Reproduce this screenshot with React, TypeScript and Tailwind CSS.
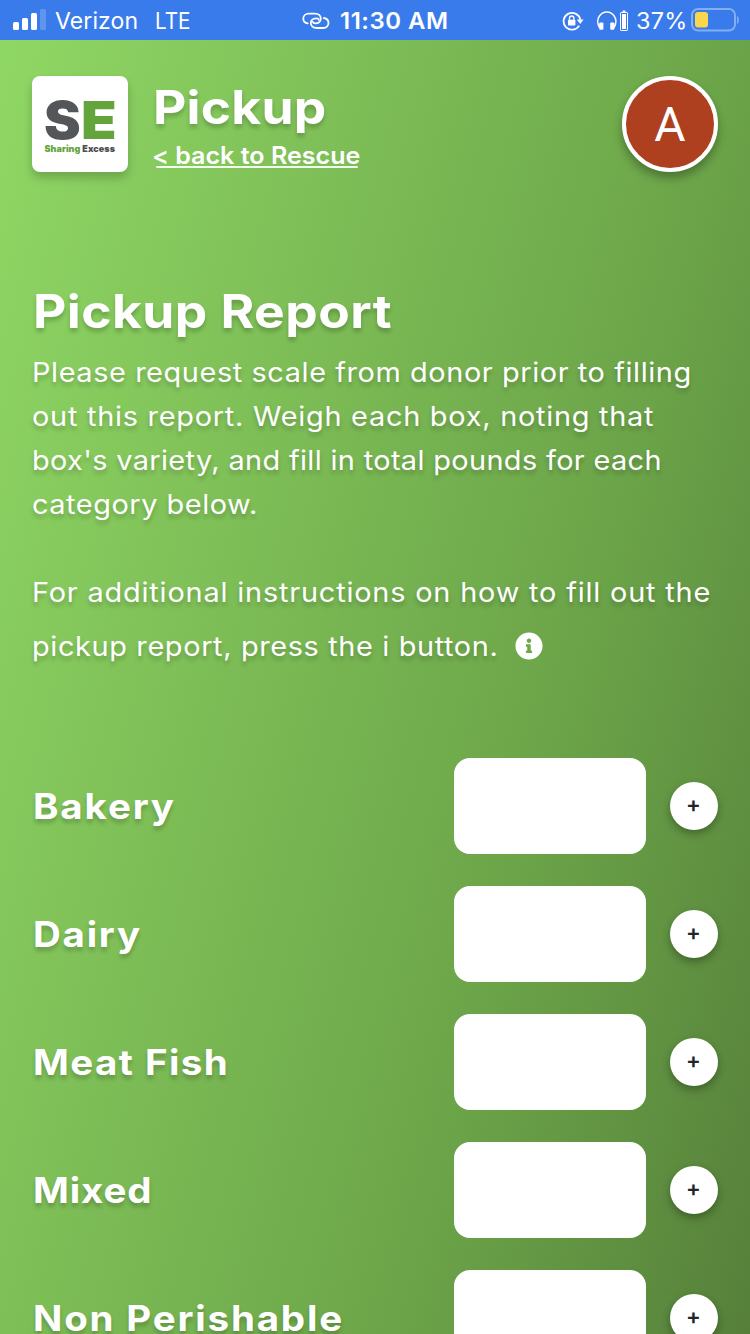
import { FaInfoCircle } from "react-icons/fa";

const CATEGORIES = [
  { name: "Bakery", tracking: "tracking-[1.7px]" },
  { name: "Dairy", tracking: "tracking-[1.6px]" },
  { name: "Meat Fish", tracking: "tracking-[1.3px]" },
  { name: "Mixed", tracking: "tracking-[0.8px]" },
  { name: "Non Perishable", tracking: "tracking-[1.65px]" },
];

function StatusBar() {
  return (
    <div className="flex h-10 shrink-0 items-center bg-[#397bea] text-[23px] leading-none text-white">
      <svg className="ml-[13px] shrink-0" width="33" height="22" viewBox="0 0 33 22" fill="white">
        <rect x="0" y="13" width="6" height="8" rx="1.5" />
        <rect x="9" y="9" width="6" height="12" rx="1.5" />
        <rect x="18" y="4" width="6" height="17" rx="1.5" />
        <rect x="27" y="0" width="6" height="21" rx="1.5" opacity="0.2" />
      </svg>
      <span className="mt-0.5 ml-[9px] w-[84px] tracking-[0.1px]">Verizon</span>
      <span className="mt-0.5 ml-[16px] w-[36px] origin-left scale-x-[0.9]">LTE</span>

      <svg className="mt-px ml-[111px] shrink-0" width="28" height="18" viewBox="0 0 28 18" fill="none" stroke="white" strokeWidth="1.8" strokeLinecap="round">
        <path d="M5.8 11.4C3 10.9 1.3 9 1.3 6.7C1.3 3.8 3.6 1.6 6.6 1.6H13C16.4 1.6 18.8 3.6 18.8 6.5C18.8 9.4 16.6 11.3 13.6 11.3C11.8 11.3 10.9 10.6 10.9 9.8" />
        <path d="M21.9 6C24.8 6.6 26.5 8.5 26.5 11C26.5 13.9 24.2 16 21.2 16H14.6C11.2 16 8.8 14 8.8 11.1C8.8 8.2 11 6.3 14 6.3C15.8 6.3 16.7 7 16.7 7.8" />
      </svg>
      <span className="mt-0.5 ml-[10px] w-[108px] origin-left scale-x-[1.04] font-semibold tracking-[0.5px] whitespace-nowrap">
        11:30 AM
      </span>

      <svg className="mt-px ml-[114px] shrink-0" width="22" height="20" viewBox="0 0 22 20" fill="none" stroke="white" strokeWidth="1.8">
        <path d="M17.2 14.6A8.4 8.4 0 1 1 18.2 8.5" />
        <path d="M14.8 8.6H21.6L18.2 13Z" fill="white" stroke="none" />
        <rect x="6" y="8.8" width="7.4" height="5.8" rx="0.8" fill="white" stroke="none" />
        <path d="M7.5 9V7.2A2.2 2.2 0 0 1 11.9 7.2V9" strokeWidth="1.3" />
      </svg>
      <svg className="mt-px ml-[13px] shrink-0" width="32" height="22" viewBox="0 0 32 22" fill="none" stroke="white">
        <path d="M2.6 17.5C0.2 14 0.3 9.3 2.2 6.4C4 3.5 6.8 2 9.8 2C12.8 2 15.6 3.5 17.4 6.4C19.3 9.3 19.4 14 17 17.5" strokeWidth="1.6" />
        <rect x="2.2" y="12.5" width="4.2" height="7.3" rx="1" fill="white" stroke="none" />
        <rect x="13.2" y="12.5" width="4.2" height="7.3" rx="1" fill="white" stroke="none" />
        <rect x="23.5" y="2.5" width="7" height="18" rx="0.6" />
        <rect x="25" y="4" width="4" height="15" fill="white" stroke="none" />
        <rect x="25.5" y="0.5" width="3" height="1.5" fill="white" stroke="none" />
      </svg>
      <span className="mt-0.5 ml-[7px] w-[51px] origin-left scale-x-[1.02] tracking-[0.2px]">37%</span>
      <svg className="ml-[4px] shrink-0" width="49" height="24" viewBox="0 0 49 24">
        <rect x="1" y="1" width="43" height="21.5" rx="6" fill="none" stroke="#83aff2" strokeWidth="2" />
        <rect x="4" y="4" width="13" height="15.5" rx="3" fill="#f8d74a" />
        <path d="M46 8C48.5 9 48.5 15 46 16Z" fill="#83aff2" />
      </svg>
    </div>
  );
}

function Logo() {
  return (
    <div className="flex h-24 w-24 shrink-0 flex-col rounded-[8px] bg-white pt-[25px] pl-[12px] shadow-[0_6px_10px_rgba(0,0,0,0.2)]">
      <div className="flex h-[36px] items-center text-[52px] leading-[36px] font-black">
        <span className="mt-1 w-[37px] origin-left scale-x-[1.06] text-[#53575a]">S</span>
        <span className="mt-1 origin-left scale-x-[1.12] text-[#64a43c]">E</span>
      </div>
      <p className="mt-[6px] ml-[0.5px] text-[9px] leading-[12px] font-black tracking-[0.07px] whitespace-nowrap text-[#4a4d50]">
        <span className="text-[#64a43c]">Sharing</span> Excess
      </p>
    </div>
  );
}

function Header() {
  return (
    <header className="flex h-[132px] shrink-0 items-start px-8 pt-9">
      <Logo />
      <div className="ml-6 flex flex-1 flex-col pt-[7px]">
        <h1 className="ml-px h-12 origin-left scale-x-[1.12] text-[46px] leading-[48px] font-bold tracking-[0.2px] [text-shadow:0_4px_4px_rgba(0,0,0,0.2)]">
          Pickup
        </h1>
        <a className="mt-[13px] h-6 origin-left scale-x-[1.045] text-[24px] leading-[24px] font-semibold whitespace-nowrap">
          &lt; back to Rescue
        </a>
        <div className="-mt-[2px] ml-1 h-[2px] w-[202px] rounded-full bg-white/90" />
      </div>
      <div className="flex h-24 w-24 items-center justify-center rounded-full border-4 border-white bg-[#ae3f1f] pt-[2px] font-['Roboto',sans-serif] text-[48px] leading-none shadow-[0_6px_10px_rgba(0,0,0,0.3)]">
        A
      </div>
    </header>
  );
}

function Report() {
  return (
    <section className="shrink-0 px-8 pt-[115px]">
      <h2 className="ml-px h-12 origin-left scale-x-[1.12] text-[46px] leading-[48px] font-bold tracking-[0.4px] [text-shadow:0_4px_4px_rgba(0,0,0,0.2)]">
        Pickup Report
      </h2>
      <div className="mt-[16px] flex origin-left scale-x-[1.07] flex-col text-[27px] leading-[44px] whitespace-nowrap [text-shadow:0_4px_4px_rgba(0,0,0,0.2)]">
        <p className="tracking-[0.55px]">Please request scale from donor prior to filling</p>
        <p className="tracking-[0.69px]">out this report. Weigh each box, noting that</p>
        <p className="tracking-[0.33px]">box's variety, and fill in total pounds for each</p>
        <p className="tracking-[0.5px]">category below.</p>
        <p className="mt-11 tracking-[0.76px]">For additional instructions on how to fill out the</p>
      </div>
      <div className="mt-[10px] flex h-11 items-center">
        <p className="w-[483px] origin-left scale-x-[1.07] text-[27px] leading-[44px] tracking-[0.59px] whitespace-nowrap [text-shadow:0_4px_4px_rgba(0,0,0,0.2)]">
          pickup report, press the i button.
        </p>
        <FaInfoCircle size={28} className="-mt-[3px]" />
      </div>
    </section>
  );
}

export default function App() {
  return (
    <div className="flex h-[1334px] w-[750px] flex-col overflow-hidden bg-[linear-gradient(105deg,#90d865_0%,#6ca549_67%,#56803a_100%)] font-['Inter',sans-serif] text-white">
      <StatusBar />
      <Header />
      <Report />
      <form className="mt-[89px] flex shrink-0 flex-col gap-8 px-8">
        {CATEGORIES.map(({ name, tracking }) => (
          <div key={name} className="flex h-24 items-center">
            <label
              className={`w-[422px] shrink-0 pl-px text-[35px] font-bold whitespace-nowrap [text-shadow:0_4px_4px_rgba(0,0,0,0.2)] ${tracking}`}
            >
              <span className="inline-block origin-left scale-x-[1.1]">{name}</span>
            </label>
            <input className="h-24 w-48 rounded-[16px] bg-white px-4 text-[#212529] outline-none" />
            <button
              type="button"
              className="ml-6 flex h-12 w-12 items-center justify-center rounded-full bg-white pr-px pb-[5px] text-[22px] leading-none font-semibold text-[#212529] shadow-[0_4px_8px_rgba(0,0,0,0.3)]"
            >
              +
            </button>
          </div>
        ))}
      </form>
    </div>
  );
}
